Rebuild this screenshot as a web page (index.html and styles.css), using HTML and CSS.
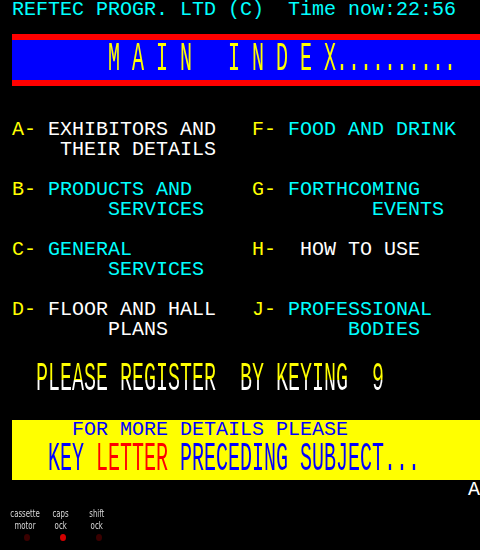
FILE: index.html
```html
<!DOCTYPE html>
<html>
<head>
<meta charset="utf-8">
<link rel="stylesheet" href="styles.css">
</head>
<body>
<div class="screen">
  <div class="row"><span class="c"> REFTEC PROGR. LTD (C)  Time now:22:56</span></div>
  <div class="row bar-bottom"><div class="bar"></div></div>
  <div class="row dh blue"><span class="txt y">        M A I N   I N D E X..........</span></div>
  <div class="row bar-top"><div class="bar"></div></div>
  <div class="row"></div>
  <div class="row"><span class="y"> A- </span><span class="w">EXHIBITORS AND   </span><span class="y">F- </span><span class="c">FOOD AND DRINK</span></div>
  <div class="row"><span class="w">     THEIR DETAILS</span></div>
  <div class="row"></div>
  <div class="row"><span class="y"> B- </span><span class="c">PRODUCTS AND     </span><span class="y">G- </span><span class="c">FORTHCOMING</span></div>
  <div class="row"><span class="c">         SERVICES              EVENTS</span></div>
  <div class="row"></div>
  <div class="row"><span class="y"> C- </span><span class="c">GENERAL          </span><span class="y">H-  </span><span class="w">HOW TO USE</span></div>
  <div class="row"><span class="c">         SERVICES</span></div>
  <div class="row"></div>
  <div class="row"><span class="y"> D- </span><span class="w">FLOOR AND HALL   </span><span class="y">J- </span><span class="c">PROFESSIONAL</span></div>
  <div class="row"><span class="w">         PLANS</span><span class="c">               BODIES</span></div>
  <div class="row"></div>
  <div class="row dh"><span class="txt split">   PLEASE REGISTER  BY KEYING  9</span></div>
  <div class="row"></div>
  <div class="row yellow"><span class="b">     FOR MORE DETAILS PLEASE</span></div>
  <div class="row dh yellow"><span class="txt"><span class="b">   KEY </span><span class="r">LETTER</span><span class="b"> PRECEDING SUBJECT...</span></span></div>
  <div class="row"><span class="w">                                       A</span></div>
</div>
<div class="leds">
  <div class="led-col">
    <span class="lbl">cassette</span>
    <span class="lbl">motor</span>
    <span class="led"></span>
  </div>
  <div class="led-col">
    <span class="lbl">caps</span>
    <span class="lbl">ock</span>
    <span class="led on"></span>
  </div>
  <div class="led-col">
    <span class="lbl">shift</span>
    <span class="lbl">ock</span>
    <span class="led"></span>
  </div>
</div>
</body>
</html>
```

FILE: styles.css
```css
html, body {
  margin: 0;
  padding: 0;
  background: #000;
}
body {
  width: 480px;
  height: 550px;
  overflow: hidden;
}
.screen {
  width: 480px;
  height: 500px;
  display: flex;
  flex-direction: column;
  font-family: "Liberation Mono", monospace;
  font-size: 20px;
  line-height: 20px;
  white-space: pre;
}
.row {
  height: 20px;
  flex: none;
  display: block;
}
.row.dh {
  height: 40px;
}
.row.dh .txt {
  display: block;
  height: 20px;
  transform: scaleY(2);
  transform-origin: 0 0;
}
.row.blue {
  margin-left: 12px;
  background: #0000ff;
}
.row.yellow {
  margin-left: 12px;
  background: #ffff00;
}
.bar-bottom {
  display: flex;
  padding-left: 12px;
  align-items: flex-end;
}
.bar-top {
  display: flex;
  padding-left: 12px;
  align-items: flex-start;
}
.bar {
  flex: 1;
  height: 6px;
  background: #ff0000;
}
.c { color: #00ffff; }
.y { color: #ffff00; }
.w { color: #ffffff; }
.b { color: #0000ff; }
.r { color: #ff0000; }
.split {
  background: linear-gradient(#ffff00 50%, #ffffff 50%);
  -webkit-background-clip: text;
  background-clip: text;
  color: transparent;
}
.leds {
  height: 50px;
  display: flex;
  padding-left: 7px;
  padding-top: 8px;
  box-sizing: border-box;
}
.led-col {
  width: 36px;
  display: flex;
  flex-direction: column;
  align-items: center;
}
.lbl {
  display: inline-block;
  font-family: "DejaVu Sans", sans-serif;
  font-size: 10px;
  line-height: 12px;
  color: #d8d8d8;
  transform: scaleX(0.7);
}
.led {
  width: 6px;
  height: 7px;
  border-radius: 50%;
  background: #3a0000;
  margin-top: 2px;
  margin-left: 3px;
}
.led.on {
  background: #d40000;
}
```
